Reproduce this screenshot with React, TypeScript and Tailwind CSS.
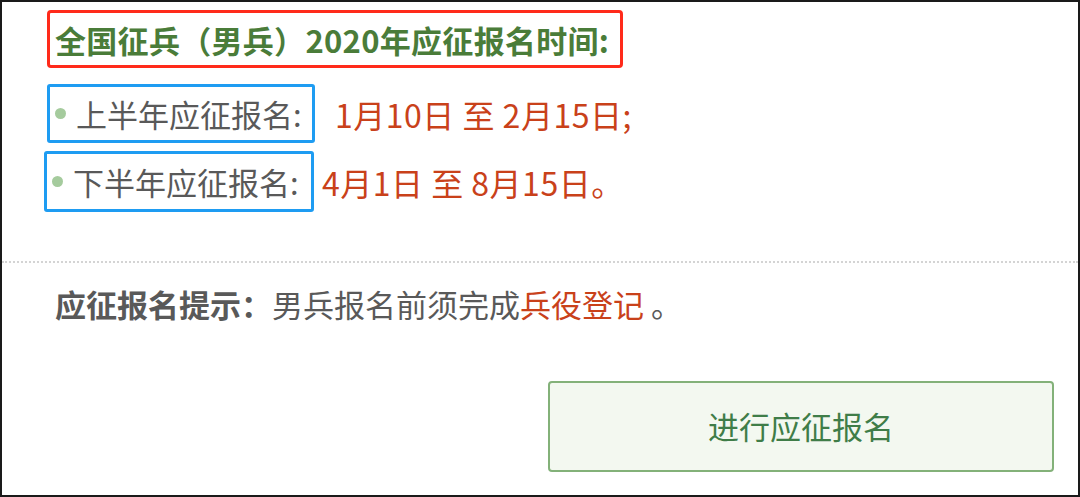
const cjk = { fontFamily: '"Noto Sans CJK SC", "Noto Sans", sans-serif' };

function PeriodRow({
  label,
  dates,
  boxClass,
  datesClass,
}: {
  label: string;
  dates: string;
  boxClass: string;
  datesClass: string;
}) {
  return (
    <div className="flex items-center">
      <div
        className={`flex items-center rounded-[3px] border-[3px] border-[#1e9cf2] ${boxClass}`}
      >
        <span className="ml-[5px] h-[11px] w-[11px] shrink-0 rounded-full bg-[#a5cb9d]" />
        <span className="ml-[10px] text-[31px] leading-none text-[#595959]">{label}</span>
      </div>
      <span className={`text-[32px] leading-none tracking-[0.5px] text-[#c9411a] ${datesClass}`}>
        {dates}
      </span>
    </div>
  );
}

export default function App() {
  return (
    <div
      className="flex h-[497px] w-[1080px] flex-col border-2 border-[#1a1a1a] bg-white"
      style={cjk}
    >
      {/* registration periods */}
      <div className="flex h-[259px] flex-col pl-[45px] pt-[8px]">
        <div className="flex h-[58px] w-[576px] items-center rounded-[4px] border-[3px] border-[#ff2a1a] pl-[5px]">
          <span className="text-[31px] font-bold leading-none tracking-[0.3px] text-[#4a7c39]">
            全国征兵（男兵）2020年应征报名时间:
          </span>
        </div>

        <div className="mt-[16px]">
          <PeriodRow
            label="上半年应征报名:"
            dates="1月10日 至 2月15日;"
            boxClass="h-[59px] w-[268px]"
            datesClass="ml-[20px]"
          />
        </div>
        <div className="mt-[8px] -ml-[3px]">
          <PeriodRow
            label="下半年应征报名:"
            dates="4月1日 至 8月15日。"
            boxClass="h-[61px] w-[270px]"
            datesClass="ml-[8px]"
          />
        </div>
      </div>

      <div className="border-t-2 border-dotted border-[#d4d4d4]" />

      {/* tip and action */}
      <div className="flex flex-1 flex-col px-[53px]">
        <p className="mt-[21px] text-[31px] leading-[40px] text-[#595959]">
          <span className="font-bold">应征报名提示：</span>
          男兵报名前须完成<span className="text-[#c9411a]">兵役登记</span> 。
        </p>
        <div className="mt-[57px] flex justify-end">
          <button
            type="button"
            className="-mr-[29px] flex h-[91px] w-[506px] items-center justify-center rounded-[4px] border-2 border-[#83b179] bg-[#f3f8f0] text-[31px] text-[#3f7d48]"
          >
            进行应征报名
          </button>
        </div>
      </div>
    </div>
  );
}
